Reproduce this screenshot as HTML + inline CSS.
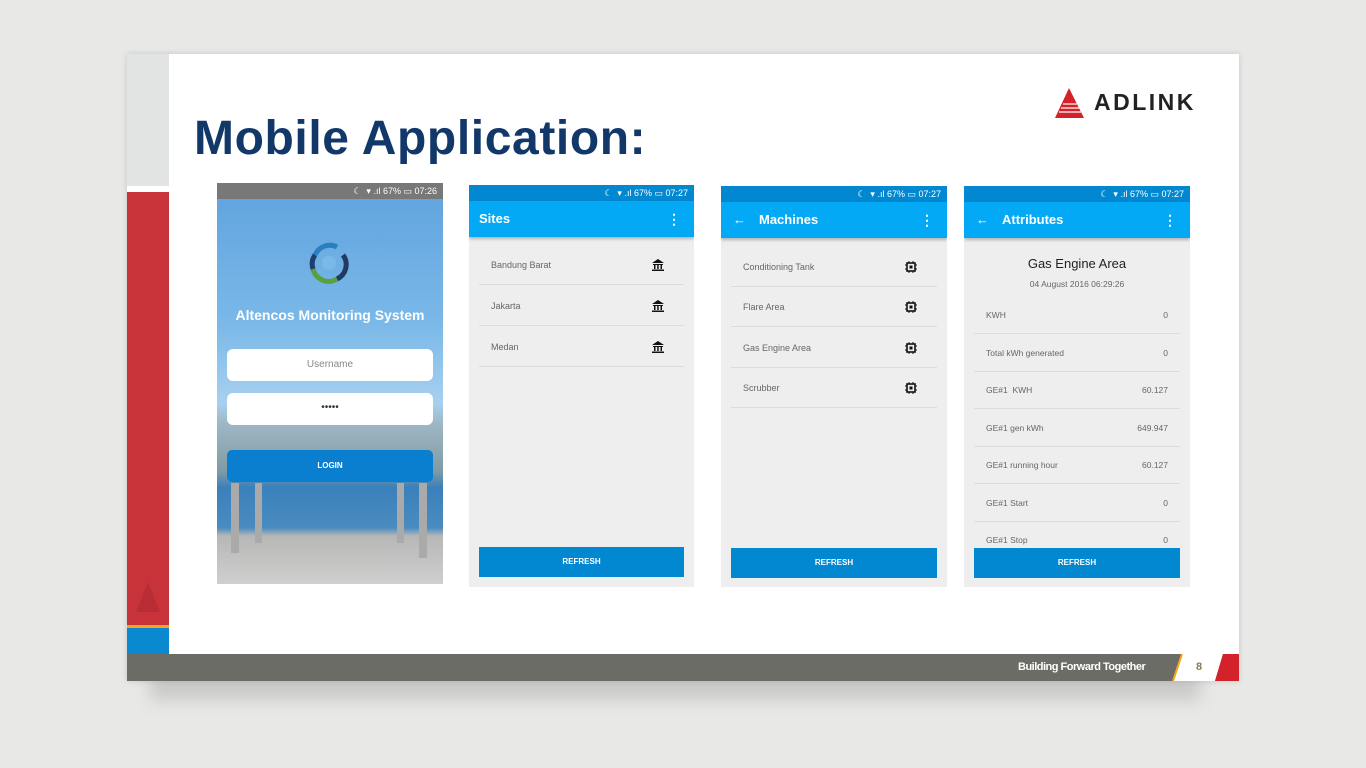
<!DOCTYPE html>
<html><head><meta charset="utf-8"><style>
*{margin:0;padding:0;box-sizing:border-box}
body{width:1366px;height:768px;overflow:hidden;background:#e8e8e6;font-family:"Liberation Sans",sans-serif;position:relative}
.a{position:absolute}
.ph{position:absolute;background:#eeeeee;overflow:hidden}
.sb{position:absolute;left:0;right:0;top:0;height:16px;background:#0288d1;color:#fff;font-size:9px;text-align:right;padding-right:6px;line-height:16px}
.ab{position:absolute;left:0;right:0;top:16px;height:36px;background:#03a9f4;color:#fff;font-size:13px;font-weight:bold;line-height:36px;box-shadow:0 2px 3px rgba(0,0,0,.25)}
.row{position:absolute;left:10px;right:10px;height:40px;border-bottom:1px solid #dcdcdc;font-size:9px;color:#666;line-height:40px;padding-left:12px}
.row .v{position:absolute;right:12px;top:0}
.btn{position:absolute;left:10px;right:10px;height:30px;background:#0288d1;color:#fff;font-size:8px;font-weight:bold;text-align:center;line-height:30px}
.dots{position:absolute;right:13px;top:0;font-size:14px}
.ic{position:absolute;right:20px;top:14px;width:12px;height:12px}
</style></head><body>
<div class="a" style="left:150px;top:670px;width:1050px;height:30px;background:#c9c9c9;filter:blur(8px)"></div>
<div class="a" style="left:127px;top:54px;width:1112px;height:627px;background:#fff;box-shadow:0 0 6px rgba(0,0,0,.15)"></div>
<div class="a" style="left:127px;top:54px;width:42px;height:132px;background:#e2e3e3"></div>
<div class="a" style="left:127px;top:192px;width:42px;height:433px;background:#c8333a"></div>
<div class="a" style="left:127px;top:625px;width:42px;height:3px;background:#f3a51c"></div>
<div class="a" style="left:127px;top:628px;width:42px;height:26px;background:#0a88d0"></div>
<svg class="a" style="left:136px;top:582px" width="24" height="30"><polygon points="12,0 24,30 0,30" fill="#b82d33"/></svg>
<div class="a" style="left:127px;top:654px;width:1112px;height:27px;background:#6b6c66"></div>
<div class="a" style="left:1018px;top:654px;height:27px;line-height:27px;color:#fff;font-size:11px;font-weight:bold;letter-spacing:-0.5px">Building Forward Together</div>
<svg class="a" style="left:1165px;top:654px" width="74" height="27"><polygon points="17,0 58,0 50,27 8,27" fill="#fff"/><line x1="17" y1="0" x2="8" y2="27" stroke="#f3a51c" stroke-width="2"/><polygon points="58,0 74,0 74,27 50,27" fill="#d4222a"/></svg>
<div class="a" style="left:1196px;top:654px;height:27px;line-height:27px;color:#8a7a50;font-size:11px;font-weight:bold">8</div>
<svg class="a" style="left:1055px;top:86px" width="32" height="32"><polygon points="14,2 29,32 0,32" fill="#d4222a"/><g stroke="#fff" stroke-width="1.2"><line x1="8" y1="18" x2="22" y2="18"/><line x1="6" y1="22" x2="24" y2="22"/><line x1="4" y1="26" x2="26" y2="26"/></g></svg>
<div class="a" style="left:1094px;top:89px;font-size:23px;font-weight:bold;color:#222;letter-spacing:2.5px">ADLINK</div>
<div class="a" style="left:194px;top:111px;font-size:48px;font-weight:bold;color:#12386a;letter-spacing:0.6px">Mobile Application:</div>

<div class="ph" style="left:217px;top:183px;width:226px;height:401px;background:linear-gradient(#5fa3de 0%,#7ab8e8 35%,#a7d0ef 55%,#9fb7c4 60%,#7f9aa6 72%,#3a80bb 76%,#4a8cc0 86%,#b6b7b6 88%,#cfd0ce 100%)">
<div class="sb" style="background:#787878">☾ ︎ ▾ .ıl 67% ▭ 07:26</div>
<svg class="a" style="left:88px;top:56px" width="48" height="48" viewBox="-24 -24 48 48"><g fill="none" stroke-width="5"><path d="M-14,-8 A16,16 0 0 1 8,-16" stroke="#2a7fc0"/><path d="M14,-8 A16,16 0 0 1 8,16" stroke="#223a5e"/><path d="M8,16 A16,16 0 0 1 -16,6" stroke="#5aa040"/><path d="M-16,6 A16,16 0 0 1 -14,-8" stroke="#1f3f6a"/></g><circle r="7" fill="#7ab8e8"/></svg>
<div class="a" style="left:0;right:0;top:124px;text-align:center;color:#fff;font-size:14px;font-weight:bold">Altencos Monitoring System</div>
<div class="a" style="left:10px;width:206px;top:166px;height:32px;background:#fff;border-radius:6px;text-align:center;line-height:32px;font-size:10px;color:#888">Username</div>
<div class="a" style="left:10px;width:206px;top:210px;height:32px;background:#fff;border-radius:6px;text-align:center;line-height:30px;font-size:10px;color:#333">•••••</div>
<div class="a" style="left:14px;top:300px;width:8px;height:70px;background:#aaa"></div>
<div class="a" style="left:38px;top:300px;width:7px;height:60px;background:#aaa"></div>
<div class="a" style="left:180px;top:300px;width:7px;height:60px;background:#aaa"></div>
<div class="a" style="left:202px;top:300px;width:8px;height:75px;background:#aaa"></div>
<div class="a" style="left:10px;width:206px;top:267px;height:32px;background:#0a7fcf;border-radius:5px;text-align:center;line-height:32px;font-size:8px;font-weight:bold;color:#fff">LOGIN</div>
</div>

<div class="ph" style="left:469px;top:185px;width:225px;height:402px">
<div class="sb">☾ ︎ ▾ .ıl 67% ▭ 07:27</div>
<div class="ab" style="padding-left:10px">Sites<span class="dots">⋮</span></div>
<div class="row" style="top:60px">Bandung Barat<svg class="ic" viewBox="0 0 12 12"><path d="M0,4 L6,0 L12,4Z M1,5h10v1H1z M2,6h1.5v4H2z M5.2,6h1.5v4H5.2z M8.5,6H10v4H8.5z M0,10.5h12V12H0z" fill="#111"/></svg></div>
<div class="row" style="top:101px">Jakarta<svg class="ic" viewBox="0 0 12 12"><path d="M0,4 L6,0 L12,4Z M1,5h10v1H1z M2,6h1.5v4H2z M5.2,6h1.5v4H5.2z M8.5,6H10v4H8.5z M0,10.5h12V12H0z" fill="#111"/></svg></div>
<div class="row" style="top:142px">Medan<svg class="ic" viewBox="0 0 12 12"><path d="M0,4 L6,0 L12,4Z M1,5h10v1H1z M2,6h1.5v4H2z M5.2,6h1.5v4H5.2z M8.5,6H10v4H8.5z M0,10.5h12V12H0z" fill="#111"/></svg></div>
<div class="btn" style="top:362px">REFRESH</div>
</div>

<div class="ph" style="left:721px;top:186px;width:226px;height:401px">
<div class="sb">☾ ︎ ▾ .ıl 67% ▭ 07:27</div>
<div class="ab" style="padding-left:38px"><span class="a" style="left:12px">←</span>Machines<span class="dots">⋮</span></div>
<div class="row" style="top:61px">Conditioning Tank<svg class="ic" viewBox="0 0 12 12"><rect x="2" y="2" width="8" height="8" fill="none" stroke="#111" stroke-width="1.6"/><rect x="4.5" y="4.5" width="3" height="3" fill="#111"/><path d="M4,0v2M8,0v2M4,10v2M8,10v2M0,4h2M0,8h2M10,4h2M10,8h2" stroke="#111"/></svg></div>
<div class="row" style="top:101px">Flare Area<svg class="ic" viewBox="0 0 12 12"><rect x="2" y="2" width="8" height="8" fill="none" stroke="#111" stroke-width="1.6"/><rect x="4.5" y="4.5" width="3" height="3" fill="#111"/><path d="M4,0v2M8,0v2M4,10v2M8,10v2M0,4h2M0,8h2M10,4h2M10,8h2" stroke="#111"/></svg></div>
<div class="row" style="top:142px">Gas Engine Area<svg class="ic" viewBox="0 0 12 12"><rect x="2" y="2" width="8" height="8" fill="none" stroke="#111" stroke-width="1.6"/><rect x="4.5" y="4.5" width="3" height="3" fill="#111"/><path d="M4,0v2M8,0v2M4,10v2M8,10v2M0,4h2M0,8h2M10,4h2M10,8h2" stroke="#111"/></svg></div>
<div class="row" style="top:182px">Scrubber<svg class="ic" viewBox="0 0 12 12"><rect x="2" y="2" width="8" height="8" fill="none" stroke="#111" stroke-width="1.6"/><rect x="4.5" y="4.5" width="3" height="3" fill="#111"/><path d="M4,0v2M8,0v2M4,10v2M8,10v2M0,4h2M0,8h2M10,4h2M10,8h2" stroke="#111"/></svg></div>
<div class="btn" style="top:362px">REFRESH</div>
</div>

<div class="ph" style="left:964px;top:186px;width:226px;height:401px">
<div class="sb">☾ ︎ ▾ .ıl 67% ▭ 07:27</div>
<div class="ab" style="padding-left:38px"><span class="a" style="left:12px">←</span>Attributes<span class="dots">⋮</span></div>
<div class="a" style="left:0;right:0;top:70px;text-align:center;font-size:13px;color:#222">Gas Engine Area</div>
<div class="a" style="left:0;right:0;top:93px;text-align:center;font-size:8.5px;color:#666">04 August 2016 06:29:26</div>
<div class="row" style="top:110px;height:38px;line-height:38px;font-size:8.5px">KWH<span class="v">0</span></div>
<div class="row" style="top:148px;height:38px;line-height:38px;font-size:8.5px">Total kWh generated<span class="v">0</span></div>
<div class="row" style="top:185px;height:38px;line-height:38px;font-size:8.5px">GE#1&nbsp; KWH<span class="v">60.127</span></div>
<div class="row" style="top:223px;height:38px;line-height:38px;font-size:8.5px">GE#1 gen kWh<span class="v">649.947</span></div>
<div class="row" style="top:260px;height:38px;line-height:38px;font-size:8.5px">GE#1 running hour<span class="v">60.127</span></div>
<div class="row" style="top:298px;height:38px;line-height:38px;font-size:8.5px">GE#1 Start<span class="v">0</span></div>
<div class="row" style="top:335px;height:38px;line-height:38px;font-size:8.5px;border:0">GE#1 Stop<span class="v">0</span></div>
<div class="btn" style="top:362px">REFRESH</div>
</div>
</body></html>
